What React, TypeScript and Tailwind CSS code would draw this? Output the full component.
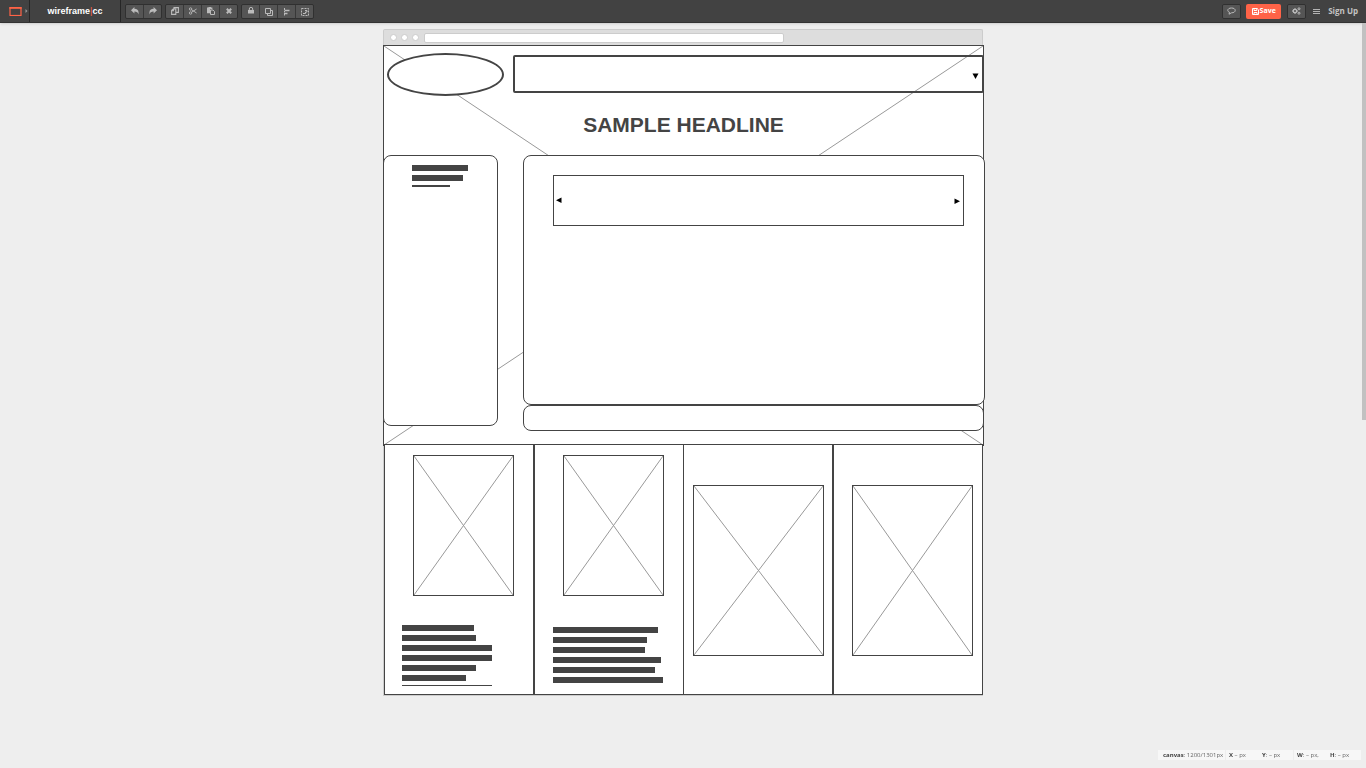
import type { ReactNode } from "react";

type ToolProps = { children: ReactNode; label: string };

function ToolButton({ children, label }: ToolProps) {
  return (
    <button
      type="button"
      aria-label={label}
      className="flex h-[13px] w-[17px] items-center justify-center bg-[#555] pb-px text-[#bbb]"
    >
      {children}
    </button>
  );
}

function Group({ children }: { children: ReactNode }) {
  return (
    <div className="flex gap-px overflow-hidden rounded-xs border border-[#303030] bg-[#383838]">
      {children}
    </div>
  );
}

function Glyph({ d }: { d: string }) {
  return (
    <svg viewBox="0 0 8 8" width="8" height="8" fill="none" stroke="currentColor" strokeWidth="1.1" aria-hidden="true">
      <path d={d} />
    </svg>
  );
}

function Undo({ flip = false }: { flip?: boolean }) {
  return (
    <svg viewBox="0 0 8 8" width="8" height="8" fill="currentColor" aria-hidden="true">
      <path
        d="M0 3.2 3.4 0V1.8C6.4 1.8 8.2 3.4 7.4 7.4 7 5.4 5.8 4.6 3.4 4.6V6.4Z"
        transform={flip ? "translate(8 0) scale(-1 1)" : undefined}
      />
    </svg>
  );
}

function TopBar() {
  return (
    <header className="flex h-[23px] items-stretch justify-between border-b border-[#333] bg-[#424242] font-['Open_Sans',sans-serif] shadow-sm">
      <div className="flex">
        <button
          type="button"
          aria-label="Canvas type"
          className="flex w-[30px] items-center gap-[3px] border-r border-[#262626] pl-[9px]"
        >
          <svg width="13" height="9" viewBox="0 0 13 9" aria-hidden="true">
            <rect x="1" y="0.5" width="11" height="8" fill="none" stroke="#ff6347" strokeWidth="1.2" />
            <path d="M0.4 1h12.2" stroke="#ff6347" strokeWidth="1.6" />
          </svg>
          <svg width="3" height="4" viewBox="0 0 3 4" aria-hidden="true">
            <path d="M0.5 0 2.5 2 0.5 4Z" fill="#999" />
          </svg>
        </button>
        <a
          href="#"
          className="flex w-[91px] items-center justify-center border-r border-[#262626] font-['Liberation_Sans',sans-serif] text-[9px] leading-[12px] font-bold text-white"
        >
          wireframe<span className="font-normal text-[#ff6347]">|</span>cc
        </a>
        <nav aria-label="Edit tools" className="flex items-center gap-[3px] pl-[4px]">
          <Group>
            <ToolButton label="Undo"><Undo /></ToolButton>
            <ToolButton label="Redo"><Undo flip /></ToolButton>
          </Group>
          <Group>
            <ToolButton label="Copy"><Glyph d="M3 2V.6H7.4V5.4H5M.6 3.4 2.2 2H4.8V7.4H.6ZM.6 3.8H2.4V2" /></ToolButton>
            <ToolButton label="Cut">
              <svg viewBox="0 0 8 8" width="8" height="8" fill="none" stroke="currentColor" strokeWidth="0.9" aria-hidden="true">
                <circle cx="1.6" cy="2" r="1.2" /><circle cx="1.6" cy="6" r="1.2" />
                <path d="M2.6 2.8 7.6 6M2.6 5.2 7.6 2" />
              </svg>
            </ToolButton>
            <ToolButton label="Paste">
              <svg viewBox="0 0 8 8" width="8" height="8" aria-hidden="true">
                <path d="M0 .6H1.5V0H4V.6H5.4V2.2H3V6.2H0Z" fill="currentColor" />
                <path d="M3.5 3H6L7.5 4.5V7.5H3.5Z" fill="none" stroke="currentColor" />
              </svg>
            </ToolButton>
            <ToolButton label="Delete">
              <svg viewBox="0 0 8 8" width="8" height="8" stroke="currentColor" strokeWidth="2" aria-hidden="true">
                <path d="M1.8 1.8 6.2 6.2M6.2 1.8 1.8 6.2" />
              </svg>
            </ToolButton>
          </Group>
          <Group>
            <ToolButton label="Lock">
              <svg viewBox="0 0 8 8" width="8" height="8" aria-hidden="true">
                <path d="M2.3 3.2V2a1.7 1.7 0 0 1 3.4 0V3.2" fill="none" stroke="currentColor" />
                <path d="M1 3H7V6.6H1Z" fill="currentColor" />
              </svg>
            </ToolButton>
            <ToolButton label="Arrange">
              <svg viewBox="0 0 8 8" width="8" height="8" className="mt-[2px]" fill="none" stroke="currentColor" aria-hidden="true">
                <path d="M.5 .5H5.5V5.5H.5ZM5.5 2.5H7.5V7.5H2.5V5.5" />
              </svg>
            </ToolButton>
            <ToolButton label="Align">
              <svg viewBox="0 0 8 8" width="8" height="8" className="mt-[2px]" fill="none" stroke="currentColor" aria-hidden="true">
                <path d="M1.5 0V8" strokeDasharray="2 0.5" />
                <path d="M2 2.5H6.5M2 5.5H4.5" strokeWidth="1.4" />
              </svg>
            </ToolButton>
            <ToolButton label="Group">
              <svg viewBox="0 0 8 8" width="8" height="8" className="mt-[2px]" fill="none" stroke="currentColor" aria-hidden="true">
                <path d="M.5 .5H7.5V7.5H.5Z" strokeDasharray="2 1" />
                <path d="M2 5.5H4.5V4H6V2.5H4" />
              </svg>
            </ToolButton>
          </Group>
        </nav>
      </div>
      <div className="flex items-center pr-[8px]">
        <Group>
          <ToolButton label="Comments">
            <svg viewBox="0 0 9 8" width="9" height="8" fill="none" stroke="currentColor" aria-hidden="true">
              <path d="M4.5 1C6.8 1 8.2 2 8.2 3.4S6.8 5.8 4.5 5.8L2 7.2 2.5 5.3C1.4 4.9.8 4.2.8 3.4.8 2 2.2 1 4.5 1Z" />
            </svg>
          </ToolButton>
        </Group>
        <button
          type="button"
          className="ml-[5px] flex h-[15px] w-[35px] items-center justify-center gap-px rounded-xs bg-[#ff6347] text-[7px] leading-[10px] font-bold text-white"
        >
          <svg viewBox="0 0 7 7" width="7" height="7" fill="none" stroke="currentColor" aria-hidden="true">
            <path d="M.5 .5H5.2L6.5 1.8V6.5H.5ZM2 .5V2.5H4.8V.5M2 6.5V4.5H5V6.5" />
          </svg>
          Save
        </button>
        <div className="ml-[6px]">
          <Group>
            <ToolButton label="Settings">
              <svg viewBox="0 0 9 8" width="9" height="8" fill="none" stroke="currentColor" aria-hidden="true">
                <circle cx="3" cy="4" r="1.7" strokeWidth="1.3" />
                <path d="M3 1V2M3 6V7M0 4H1M5 4H6M.9 1.9 1.7 2.7M.9 6.1 1.7 5.3" />
                <circle cx="7" cy="1.8" r="1" /><circle cx="7" cy="6.2" r="1" />
              </svg>
            </ToolButton>
          </Group>
        </div>
        <button type="button" aria-label="Menu" className="ml-[7px] text-[#b4b4b4]">
          <svg viewBox="0 0 7 5" width="7" height="5" stroke="currentColor" aria-hidden="true">
            <path d="M0 .5H7M0 2.5H7M0 4.5H7" />
          </svg>
        </button>
        <a href="#" className="ml-[8px] text-[8px] leading-[12px] font-bold text-[#c4c4c4]">
          Sign Up
        </a>
      </div>
    </header>
  );
}

function Cross() {
  return (
    <svg className="absolute inset-0 size-full" aria-hidden="true">
      <line x1="0" y1="0" x2="100%" y2="100%" stroke="#999" />
      <line x1="100%" y1="0" x2="0" y2="100%" stroke="#999" />
    </svg>
  );
}

function ImageBox({ size }: { size: string }) {
  return (
    <div className={`relative border border-[#444] bg-white ${size}`}>
      <Cross />
    </div>
  );
}

function TextLines({ widths, tail }: { widths: number[]; tail?: [number, number] }) {
  return (
    <div className="flex flex-col gap-[4px]">
      {widths.map((w, i) => (
        <div key={i} className="h-[6px] bg-[#444]" style={{ width: w }} />
      ))}
      {tail && <div className="bg-[#444]" style={{ width: tail[0], height: tail[1] }} />}
    </div>
  );
}

function Arrow({ d }: { d: string }) {
  return (
    <svg width="7" height="7" viewBox="0 0 7 7" fill="#000" aria-hidden="true">
      <path d={d} />
    </svg>
  );
}

function BrowserChrome() {
  return (
    <div className="flex h-[16px] items-center rounded-t-xs border border-b-0 border-[#ccc] bg-[#ddd] pl-[6px]">
      <div className="flex gap-[4px]">
        {[0, 1, 2].map((i) => (
          <span key={i} className="size-[7px] rounded-full border border-[#ccc] bg-white" />
        ))}
      </div>
      <input
        aria-label="Address"
        className="ml-[5px] h-[10px] w-[360px] rounded-xs border border-[#ccc] bg-white"
      />
    </div>
  );
}

function Hero() {
  return (
    <section className="relative h-[401px] w-[601px] border border-[#444] bg-white">
      <Cross />
      <div className="relative -mr-px flex items-start pt-[7px] pl-[3px]">
        <div className="h-[43px] w-[117px] rounded-[50%] border-2 border-[#444] bg-white" />
        <button
          type="button"
          aria-label="Open list"
          className="mt-[2px] ml-[9px] flex h-[38px] flex-1 items-center justify-end rounded-xs border-2 border-[#444] pt-[4px] pr-[3px]"
        >
          <Arrow d="M.5 .5H6.5L3.5 6Z" />
        </button>
      </div>
      <h1 className="relative h-[59px] pt-[17px] text-center font-['Liberation_Sans',sans-serif] text-[21px] leading-[24px] font-bold text-[#444]">
        SAMPLE HEADLINE
      </h1>
      <div className="relative -mx-px flex items-start gap-[25px]">
        <aside className="h-[271px] w-[115px] rounded-lg border border-[#444] bg-white pt-[9px] pl-[28px]">
          <TextLines widths={[56, 51]} tail={[38, 2]} />
        </aside>
        <div className="flex-1">
          <div className="-mr-px h-[250px] rounded-lg border border-[#444] bg-white pt-[19px] pr-[20px] pl-[29px]">
            <div className="flex h-[51px] items-center justify-between border border-[#444] px-[2px]">
              <button type="button" aria-label="Previous"><Arrow d="M5.5 .5V6L0 3.2Z" /></button>
              <button type="button" aria-label="Next" className="pt-[2px]"><Arrow d="M0.5 .5V6L6 3.2Z" /></button>
            </div>
          </div>
          <div className="h-[26px] rounded-lg border border-[#444] bg-white" />
        </div>
      </div>
    </section>
  );
}

function Columns() {
  const cell = "h-[251px] w-[150px] border border-[#444] bg-white";
  return (
    <section className="relative -mt-[2px] ml-px flex">
      <div className={`${cell} pt-[10px]`}>
        <div className="pl-[28px]"><ImageBox size="h-[141px] w-[101px]" /></div>
        <div className="pt-[29px] pl-[17px]">
          <TextLines widths={[72, 74, 90, 90, 74, 64]} tail={[90, 1]} />
        </div>
      </div>
      <div className={`${cell} pt-[10px]`}>
        <div className="pl-[28px]"><ImageBox size="h-[141px] w-[101px]" /></div>
        <div className="pt-[31px] pl-[18px]">
          <TextLines widths={[105, 94, 92, 108, 102, 110]} />
        </div>
      </div>
      <div className={`${cell} -ml-px pt-[40px] pl-[9px]`}>
        <ImageBox size="h-[171px] w-[131px]" />
      </div>
      <div className={`${cell} pt-[40px] pl-[18px]`}>
        <ImageBox size="h-[171px] w-[121px]" />
      </div>
    </section>
  );
}

function StatusBar() {
  return (
    <footer className="fixed right-[5px] bottom-[8px] flex gap-px font-['Open_Sans',sans-serif] text-[6px] leading-[10px] text-[#666]">
      <div className="w-[67px] bg-[#f7f7f7] pl-[5px]"><b className="text-[#444]">canvas</b>: 1200/1301px</div>
      <div className="flex w-[67px] bg-[#f7f7f7] pl-[3px]">
        <span className="w-[33px]"><b className="text-[#444]">X</b> – px</span>
        <span><b className="text-[#444]">Y</b>: – px</span>
      </div>
      <div className="flex w-[67px] bg-[#f7f7f7] pl-[3px]">
        <span className="w-[33px]"><b className="text-[#444]">W</b>: – px,</span>
        <span><b className="text-[#444]">H</b>: – px</span>
      </div>
    </footer>
  );
}

export default function App() {
  return (
    <div className="relative min-h-screen bg-[#eee]">
      <TopBar />
      <main className="mx-auto w-[600px] pt-[6px]">
        <BrowserChrome />
        <div className="h-[651px] border-b border-l border-[#ccc] bg-white">
          <div className="-ml-px">
            <Hero />
            <Columns />
          </div>
        </div>
      </main>
      <div className="absolute top-[23px] right-0 h-[397px] w-[4px] bg-[#c1c1c1]" />
      <StatusBar />
    </div>
  );
}
